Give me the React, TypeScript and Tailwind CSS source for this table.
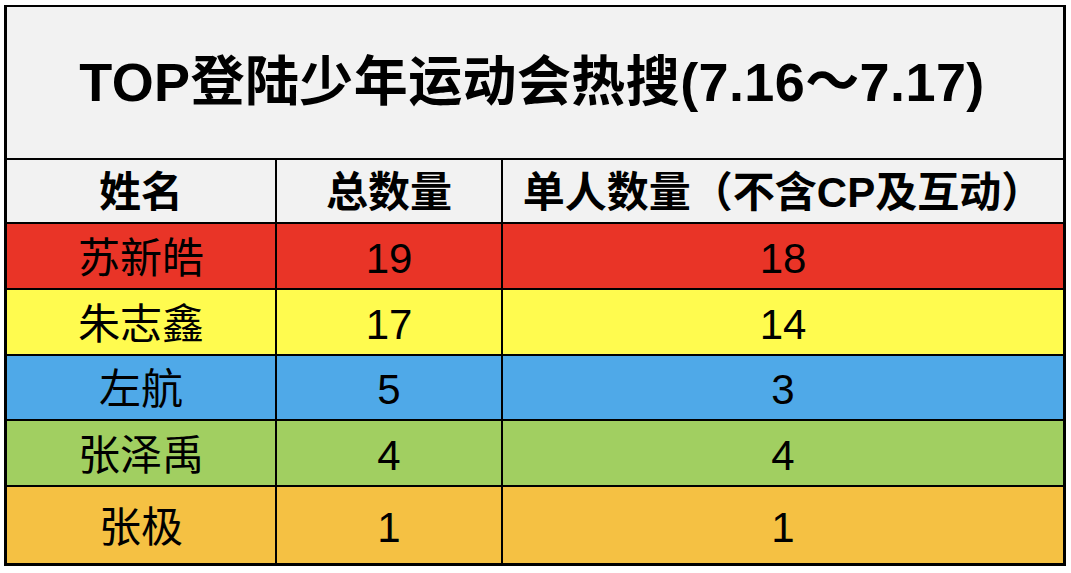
import React from 'react';

const rows = [
  { name: '苏新皓', total: 19, solo: 18, bg: 'bg-[#e93427]', h: 'h-[64px]' },
  { name: '朱志鑫', total: 17, solo: 14, bg: 'bg-[#fffb4f]', h: 'h-[64px]' },
  { name: '左航', total: 5, solo: 3, bg: 'bg-[#4fa9e8]', h: 'h-[63px]' },
  { name: '张泽禹', total: 4, solo: 4, bg: 'bg-[#a1cf61]', h: 'h-[64px]' },
  { name: '张极', total: 1, solo: 1, bg: 'bg-[#f5c143]', h: 'h-[76px]' },
];

const font = { fontFamily: '"Liberation Sans", "Noto Sans CJK SC", sans-serif' };

export default function App() {
  return (
    <div className="w-[1071px] h-[573px] bg-white overflow-hidden text-black" style={font}>
      <div className="ml-[4px] mt-[5px] w-[1062px] bg-black pl-[3px] pr-[3px] pt-[2px] pb-[3px]">
        <div className="grid grid-cols-[268px_224px_560px] gap-[2px]">
          {/* title */}
          <div className="col-span-3 h-[151px] bg-[#f2f2f2] flex items-center justify-center pb-[2px] pr-[6px]">
            <span className="text-[54px] font-bold leading-none tracking-[0.4px]">TOP登陆少年运动会热搜(7.16～7.17)</span>
          </div>

          {/* header */}
          <div className="h-[62px] bg-[#f2f2f2] flex items-center justify-center pt-[3px] text-[42px] font-bold leading-none">姓名</div>
          <div className="h-[62px] bg-[#f2f2f2] flex items-center justify-center pt-[3px] text-[42px] font-bold leading-none">总数量</div>
          <div className="h-[62px] bg-[#f2f2f2] flex items-center justify-center pt-[3px] text-[42px] font-bold leading-none whitespace-nowrap">单人数量（不含CP及互动）</div>

          {rows.map((r) => (
            <React.Fragment key={r.name}>
              <div className={`${r.h} ${r.bg} flex items-center justify-center pt-[5px] text-[42px] leading-none`}>{r.name}</div>
              <div className={`${r.h} ${r.bg} flex items-center justify-center pt-[5px] text-[42px] leading-none`}>{r.total}</div>
              <div className={`${r.h} ${r.bg} flex items-center justify-center pt-[5px] text-[42px] leading-none`}>{r.solo}</div>
            </React.Fragment>
          ))}
        </div>
      </div>
    </div>
  );
}
